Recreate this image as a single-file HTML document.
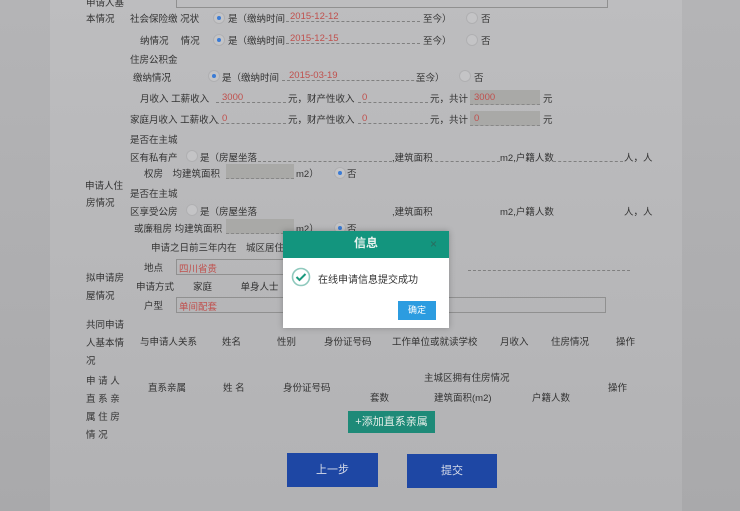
<!DOCTYPE html><html><head><meta charset="utf-8"><style>
body{margin:0;width:740px;height:511px;overflow:hidden;background:linear-gradient(#b4b4b6,#a9a9ab);font-family:"Liberation Sans","Noto Sans CJK SC",sans-serif;font-size:9.5px;color:#333;position:relative}
.panel{position:absolute;left:50px;top:0;width:632px;height:511px;background:linear-gradient(#bdbdbf,#b2b2b4)}
.t{position:absolute;white-space:nowrap}
.r{color:#c0504d}
.dl{position:absolute;border-bottom:1px dashed #808080;height:12px}
.gb{position:absolute;background:#a9a9a7;height:14px;border-bottom:1px dashed #888}
.rad{position:absolute;width:10px;height:10px;border-radius:50%;background:#c4c4c6;border:1px solid #b0b0b2}
.rad.on::after{content:"";position:absolute;left:3px;top:3px;width:4px;height:4px;border-radius:50%;background:#3a7bd5}
.sel{position:absolute;border:1px solid #909090;height:14px}
</style></head><body>
<div class="panel"></div>
<div class="sel" style="left:176px;top:-8px;width:430px"></div>
<div class="t" style="left:86px;top:-5px">申请人基</div>
<div class="t" style="left:86px;top:11px">本情况</div>
<div class="t" style="left:130px;top:11px">社会保险缴 况状</div>
<div class="rad on" style="left:213px;top:12px"></div><div class="t" style="left:228px;top:11px">是（缴纳时间</div>
<div class="dl" style="left:286px;top:9px;width:134px"></div><div class="t r" style="left:290px;top:11px">2015-12-12</div>
<div class="t" style="left:423px;top:11px">至今）</div><div class="rad" style="left:466px;top:12px"></div><div class="t" style="left:481px;top:11px">否</div>
<div class="t" style="left:140px;top:33px">纳情况　 情况</div>
<div class="rad on" style="left:213px;top:34px"></div><div class="t" style="left:228px;top:33px">是（缴纳时间</div>
<div class="dl" style="left:286px;top:31px;width:134px"></div><div class="t r" style="left:290px;top:33px">2015-12-15</div>
<div class="t" style="left:423px;top:33px">至今）</div><div class="rad" style="left:466px;top:34px"></div><div class="t" style="left:481px;top:33px">否</div>
<div class="t" style="left:130px;top:52px">住房公积金</div>
<div class="t" style="left:133px;top:70px">缴纳情况</div>
<div class="rad on" style="left:208px;top:70px"></div><div class="t" style="left:222px;top:70px">是（缴纳时间</div>
<div class="dl" style="left:282px;top:68px;width:152px"></div><div class="t r" style="left:289px;top:70px">2015-03-19</div>
<div class="t" style="left:416px;top:70px">至今）</div><div class="rad" style="left:459px;top:70px"></div><div class="t" style="left:474px;top:70px">否</div>
<div class="t" style="left:140px;top:91px">月收入 工薪收入</div>
<div class="dl" style="left:216px;top:90px;width:70px"></div><div class="t r" style="left:222px;top:92px">3000</div>
<div class="t" style="left:288px;top:91px">元，财产性收入</div><div class="dl" style="left:358px;top:90px;width:70px"></div><div class="t r" style="left:362px;top:92px">0</div>
<div class="t" style="left:430px;top:91px">元，共计</div><div class="gb" style="left:470px;top:90px;width:70px"></div><div class="t r" style="left:474px;top:92px">3000</div><div class="t" style="left:543px;top:91px">元</div>
<div class="t" style="left:130px;top:112px">家庭月收入 工薪收入</div>
<div class="dl" style="left:216px;top:111px;width:70px"></div><div class="t r" style="left:222px;top:113px">0</div>
<div class="t" style="left:288px;top:112px">元，财产性收入</div><div class="dl" style="left:358px;top:111px;width:70px"></div><div class="t r" style="left:362px;top:113px">0</div>
<div class="t" style="left:430px;top:112px">元，共计</div><div class="gb" style="left:470px;top:111px;width:70px"></div><div class="t r" style="left:474px;top:113px">0</div><div class="t" style="left:543px;top:112px">元</div>
<div class="t" style="left:130px;top:132px">是否在主城</div>
<div class="t" style="left:130px;top:150px">区有私有产</div>
<div class="rad" style="left:186px;top:150px"></div><div class="t" style="left:200px;top:150px">是（房屋坐落</div>
<div class="dl" style="left:258px;top:149px;width:134px"></div>
<div class="t" style="left:392px;top:150px">,建筑面积</div><div class="dl" style="left:430px;top:149px;width:70px"></div>
<div class="t" style="left:500px;top:150px">m2,户籍人数</div><div class="dl" style="left:553px;top:149px;width:70px"></div><div class="t" style="left:624px;top:150px">人，人</div>
<div class="t" style="left:144px;top:166px">权房　均建筑面积</div>
<div class="gb" style="left:226px;top:164px;width:68px"></div><div class="t" style="left:296px;top:166px">m2）</div>
<div class="rad on" style="left:334px;top:167px"></div><div class="t" style="left:347px;top:166px">否</div>
<div class="t" style="left:85px;top:178px">申请人住</div>
<div class="t" style="left:86px;top:195px">房情况</div>
<div class="t" style="left:130px;top:186px">是否在主城</div>
<div class="t" style="left:130px;top:204px">区享受公房</div>
<div class="rad" style="left:186px;top:204px"></div><div class="t" style="left:200px;top:204px">是（房屋坐落</div>
<div class="t" style="left:392px;top:204px">,建筑面积</div><div class="t" style="left:500px;top:204px">m2,户籍人数</div><div class="t" style="left:624px;top:204px">人，人</div>
<div class="t" style="left:134px;top:221px">或廉租房 均建筑面积</div>
<div class="gb" style="left:226px;top:219px;width:68px"></div><div class="t" style="left:296px;top:221px">m2）</div>
<div class="rad on" style="left:334px;top:222px"></div><div class="t" style="left:347px;top:221px">否</div>
<div class="t" style="left:151px;top:240px">申请之日前三年内在　城区居住满</div>
<div class="t" style="left:144px;top:260px">地点</div>
<div class="sel" style="left:176px;top:259px;width:110px"></div><div class="t r" style="left:179px;top:261px">四川省贵</div>
<div class="dl" style="left:468px;top:258px;width:162px"></div>
<div class="t" style="left:86px;top:270px">拟申请房</div>
<div class="t" style="left:86px;top:288px">屋情况</div>
<div class="t" style="left:136px;top:279px">申请方式　　家庭　　　单身人士</div>
<div class="t" style="left:144px;top:298px">户型</div>
<div class="sel" style="left:176px;top:297px;width:428px"></div><div class="t r" style="left:179px;top:299px">单间配套</div>
<div class="t" style="left:86px;top:317px">共同申请</div>
<div class="t" style="left:86px;top:335px">人基本情</div>
<div class="t" style="left:86px;top:353px">况</div>
<div class="t" style="left:140px;top:334px">与申请人关系</div><div class="t" style="left:222px;top:334px">姓名</div><div class="t" style="left:277px;top:334px">性别</div>
<div class="t" style="left:324px;top:334px">身份证号码</div><div class="t" style="left:392px;top:334px">工作单位或就读学校</div>
<div class="t" style="left:500px;top:334px">月收入</div><div class="t" style="left:551px;top:334px">住房情况</div><div class="t" style="left:616px;top:334px">操作</div>
<div class="t" style="left:86px;top:373px">申 请 人</div><div class="t" style="left:86px;top:391px">直 系 亲</div>
<div class="t" style="left:86px;top:409px">属 住 房</div><div class="t" style="left:86px;top:427px">情 况</div>
<div class="t" style="left:424px;top:370px">主城区拥有住房情况</div>
<div class="t" style="left:148px;top:380px">直系亲属</div><div class="t" style="left:223px;top:380px">姓 名</div><div class="t" style="left:283px;top:380px">身份证号码</div>
<div class="t" style="left:608px;top:380px">操作</div>
<div class="t" style="left:370px;top:390px">套数</div><div class="t" style="left:434px;top:390px">建筑面积(m2)</div><div class="t" style="left:532px;top:390px">户籍人数</div>
<div style="position:absolute;left:348px;top:411px;width:87px;height:22px;background:#1e8a78;color:#e6eee9;font-size:11px;line-height:22px;text-align:center">+添加直系亲属</div>
<div style="position:absolute;left:287px;top:453px;width:91px;height:34px;background:#1e47a4;color:#d8ddea;font-size:11px;line-height:34px;text-align:center">上一步</div>
<div style="position:absolute;left:407px;top:454px;width:90px;height:34px;background:#1e47a4;color:#d8ddea;font-size:11px;line-height:34px;text-align:center">提交</div>
<div style="position:absolute;left:283px;top:231px;width:166px;height:97px;background:#fff;box-shadow:0 0 6px rgba(0,0,0,.25)">
<div style="height:27px;background:#13957e;color:#e8f2ee;font-size:12px;line-height:25px;text-align:center;font-weight:bold">信息</div>
<div style="position:absolute;right:12px;top:6px;color:#2b6b5e;font-size:12px">×</div>
<svg style="position:absolute;left:8px;top:36px" width="20" height="20" viewBox="0 0 20 20"><circle cx="10" cy="10" r="8.5" fill="none" stroke="#8fc9bd" stroke-width="1.6"/><path d="M5.5 10l3 3 6-6" fill="none" stroke="#1a9a7e" stroke-width="2"/></svg>
<div style="position:absolute;left:35px;top:40px;font-size:10px;color:#333">在线申请信息提交成功</div>
<div style="position:absolute;left:115px;top:70px;width:38px;height:19px;background:#2c9ce0;color:#fff;font-size:9px;line-height:19px;text-align:center">确定</div>
</div>
</body></html>
